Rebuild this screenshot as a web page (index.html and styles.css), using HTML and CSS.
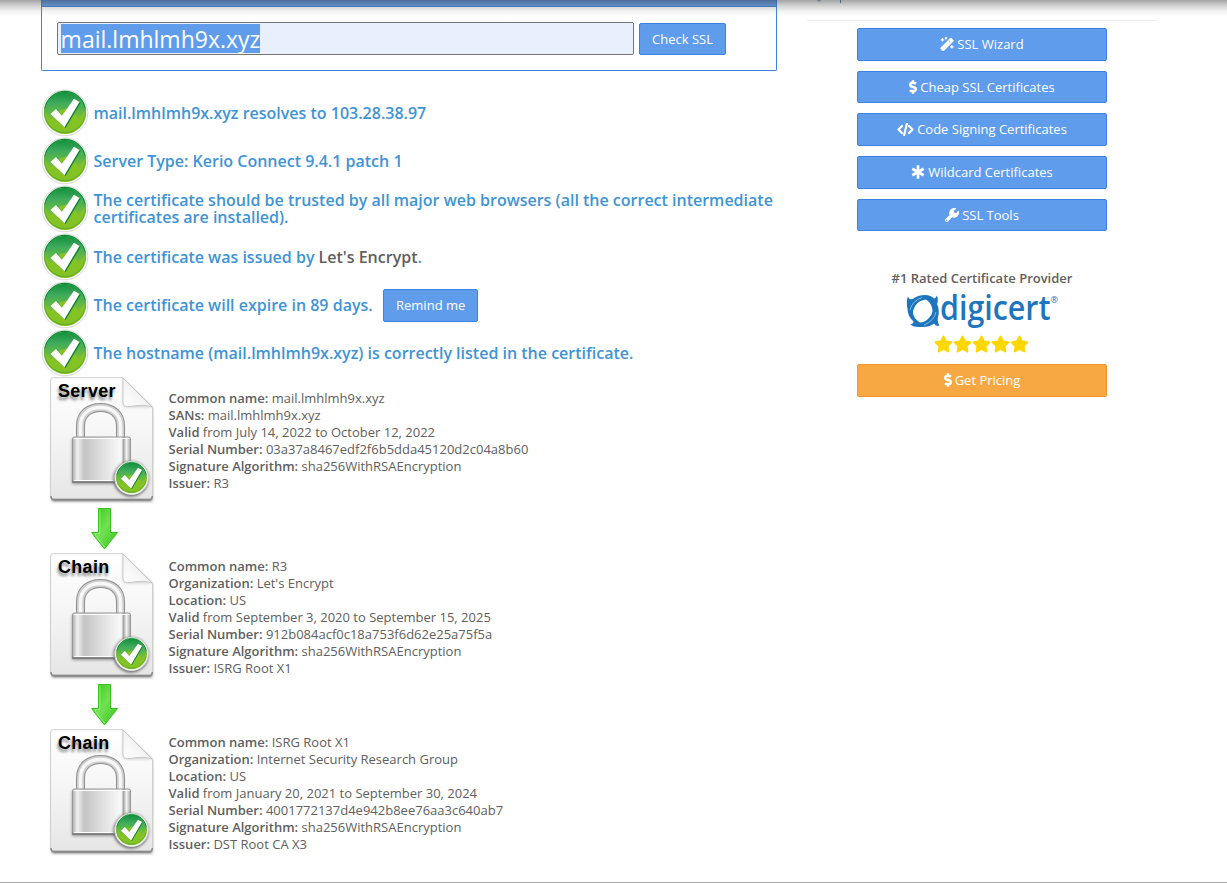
FILE: index.html
```html
<!DOCTYPE html>
<html lang="en">
<head>
<meta charset="utf-8">
<title>SSL Checker</title>
<link rel="stylesheet" href="styles.css">
</head>
<body>
<svg class="defs" aria-hidden="true">
  <defs>
    <linearGradient id="greenTop" x1="0" y1="0" x2="0" y2="1"><stop offset="0" stop-color="#138f3e"/><stop offset=".4" stop-color="#3fac5c"/><stop offset="1" stop-color="#7fc130"/></linearGradient>
    <linearGradient id="page" x1="0" y1="0" x2="0" y2="1"><stop offset="0" stop-color="#fff"/><stop offset=".45" stop-color="#f6f6f6"/><stop offset="1" stop-color="#e6e6e6"/></linearGradient>
    <linearGradient id="fold" x1="0" y1="1" x2="1" y2="0"><stop offset="0" stop-color="#fff"/><stop offset=".45" stop-color="#f4f4f4"/><stop offset="1" stop-color="#bbb"/></linearGradient>
    <linearGradient id="metal" x1="0" y1="0" x2="1" y2="0"><stop offset="0" stop-color="#aaa"/><stop offset=".08" stop-color="#f0f0f0"/><stop offset=".2" stop-color="#c4c4c4"/><stop offset=".5" stop-color="#dedede"/><stop offset=".84" stop-color="#fafafa"/><stop offset=".88" stop-color="#a5a5a5"/><stop offset=".93" stop-color="#f2f2f2"/><stop offset="1" stop-color="#aaa"/></linearGradient>
    <linearGradient id="arrowFill" x1="0" y1="0" x2="1" y2="1"><stop offset="0" stop-color="#36c51b"/><stop offset=".5" stop-color="#73e052"/><stop offset="1" stop-color="#35c51c"/></linearGradient>
    <filter id="soft" x="-20%" y="-20%" width="140%" height="150%"><feGaussianBlur stdDeviation="1.5"/></filter>
    <symbol id="check" viewBox="0 0 48 48">
      <circle cx="24" cy="24" r="22.8" fill="#fff" stroke="#dedede" stroke-width="1.2"/>
      <circle cx="24" cy="24" r="21" fill="#84c225"/>
      <path d="M3.4 20A21 21 0 0 1 44.600 20Q42 27 37 30Q32 20 24 20Q16 20 9 31Q5 26 3.400 20Z" fill="url(#greenTop)"/>
      <path d="M3.800 19A20.600 20.600 0 0 1 44.200 19" fill="none" stroke="#0d8a38" stroke-width="1.200"/>
      <path d="M3.800 19A20.600 20.600 0 1 0 44.200 19" fill="none" stroke="#4ea42b" stroke-width=".8"/>
      <path d="M10 25.500L15.500 20.500L21.500 27L33.500 10L39 13.500L24 38.500Z" fill="#087d30" transform="translate(.5 .6)"/>
      <path d="M9.500 25L15 20L21 26.800L33 9.800L38.500 13L23.500 38.300Z" fill="#fff"/>
    </symbol>
    <symbol id="doc" viewBox="0 0 128 128">
      <path d="M11 3H82L111 31V124H11Z" fill="#555" filter="url(#soft)"/>
      <path d="M12.500 .7H81.500L111.500 30.500V119Q111.500 122 108.500 122H12.500Q9.600 122 9.600 119V3.500Q9.600 .7 12.500 .7Z" fill="url(#page)" stroke="#cfcfcf"/>
      <path d="M10 119Q10 122.600 13 122.600H108Q111.300 122.600 111.300 119" fill="none" stroke="#888" stroke-width="1.500"/>
      <path d="M82 2V26Q82 30 86 30H111Q98 25 82 2Z" fill="#777" opacity=".35" filter="url(#soft)"/>
      <path d="M82 1L111 30Q103 27 90 29.500Q82 31 82 25Z" fill="url(#fold)" stroke="#c8c8c8"/>
      <path d="M39.500 61V49C39.500 37 48 30.500 59.500 30.500S79.500 37 79.500 49V61" fill="none" stroke="#8f8f8f" stroke-width="9"/>
      <path d="M39.500 61V49C39.500 37 48 30.500 59.500 30.500S79.500 37 79.500 49V61" fill="none" stroke="#cfcfcf" stroke-width="7"/>
      <path d="M39.500 61V49C39.500 37 48 30.500 59.500 30.500S79.500 37 79.500 49V61" fill="none" stroke="#f7f7f7" stroke-width="3.500"/>
      <path d="M31 62H88V107H31Z" fill="#555" opacity=".6" filter="url(#soft)"/>
      <rect x="31.500" y="60" width="58" height="45" rx="2" fill="url(#metal)" stroke="#999"/>
      <path d="M32.500 61.500H88.500M33 103.500H87" stroke="#fff"/>
      <path d="M31 105H77" stroke="#777" stroke-width="1.500"/>
      <circle cx="90" cy="102" r="17.500" fill="#666" filter="url(#soft)"/>
      <use href="#check" x="73" y="83.500" width="35" height="35"/>
    </symbol>
    <symbol id="arrow" viewBox="0 0 128 48">
      <path d="M57.500 3.500H69.500V27.500H76.500L63.500 44L50.500 27.500H57.500Z" fill="url(#arrowFill)" stroke="#34c51b"/>
      <path d="M58.800 5V28.800H53.500L63.500 42" fill="none" stroke="#a8f28c" stroke-opacity=".75"/>
    </symbol>
    <symbol id="dollar" viewBox="0 0 288 512"><path fill="currentColor" stroke="currentColor" stroke-width="16" d="M209 233l-108-31c-13-4-21-15-21-28 0-16 13-30 29-30h67c12 0 24 4 34 11 6 4 14 3 20-2l35-34c7-7 6-19-2-25-24-19-55-30-87-30V16c0-9-7-16-16-16h-32c-9 0-16 7-16 16v48h-2C46 64-6 118 1 183c4 46 40 83 84 96l103 30c12 4 20 15 20 28 0 17-13 31-29 31h-67c-12 0-24-4-34-11-6-4-14-3-20 2l-35 34c-7 7-6 19 2 25 24 19 55 30 87 30v48c0 9 7 16 16 16h32c9 0 16-7 16-16v-48c47-1 90-29 106-73 22-62-14-125-73-142z"/></symbol>
    <symbol id="star" viewBox="0 0 576 512"><path fill="currentColor" d="M259 18l-65 132-146 21c-26 4-37 36-18 55l106 103-25 145c-4 26 23 46 46 34l131-68 131 68c23 12 50-8 46-34l-25-145 106-103c19-19 8-51-18-55l-146-21-65-132c-12-24-46-24-58 0z"/></symbol>
  </defs>
</svg>
<div class="layout">
  <main class="main">
    <section class="checker">
      <div class="checker-head"></div>
      <div class="checker-form"><div class="field"><span class="selected">mail.lmhlmh9x.xyz</span></div><a class="btn">Check SSL</a></div>
    </section>
    <section class="results">
      <div class="result"><svg class="check"><use href="#check"/></svg><p>mail.lmhlmh9x.xyz resolves to 103.28.38.97</p></div>
      <div class="result"><svg class="check"><use href="#check"/></svg><p>Server Type: Kerio Connect 9.4.1 patch 1</p></div>
      <div class="result"><svg class="check"><use href="#check"/></svg><p>The certificate should be trusted by all major web browsers (all the correct intermediate<br>certificates are installed).</p></div>
      <div class="result"><svg class="check"><use href="#check"/></svg><p>The certificate was issued by <span class="issuer">Let's Encrypt</span>.</p></div>
      <div class="result"><svg class="check"><use href="#check"/></svg><p>The certificate will expire in 89 days.</p><a class="btn remind">Remind me</a></div>
      <div class="result"><svg class="check"><use href="#check"/></svg><p>The hostname (mail.lmhlmh9x.xyz) is correctly listed in the certificate.</p></div>
    </section>
    <section class="chain">
      <div class="cert">
        <div class="cert-icon"><svg><use href="#doc"/></svg><span>Server</span></div>
        <div class="cert-info"><b>Common name:</b> mail.lmhlmh9x.xyz<br><b>SANs:</b> mail.lmhlmh9x.xyz<br><b>Valid</b> from July 14, 2022 to October 12, 2022<br><b>Serial Number:</b> 03a37a8467edf2f6b5dda45120d2c04a8b60<br><b>Signature Algorithm:</b> sha256WithRSAEncryption<br><b>Issuer:</b> R3</div>
      </div>
      <svg class="arrow"><use href="#arrow"/></svg>
      <div class="cert">
        <div class="cert-icon"><svg><use href="#doc"/></svg><span>Chain</span></div>
        <div class="cert-info"><b>Common name:</b> R3<br><b>Organization:</b> Let's Encrypt<br><b>Location:</b> US<br><b>Valid</b> from September 3, 2020 to September 15, 2025<br><b>Serial Number:</b> 912b084acf0c18a753f6d62e25a75f5a<br><b>Signature Algorithm:</b> sha256WithRSAEncryption<br><b>Issuer:</b> ISRG Root X1</div>
      </div>
      <svg class="arrow"><use href="#arrow"/></svg>
      <div class="cert">
        <div class="cert-icon"><svg><use href="#doc"/></svg><span>Chain</span></div>
        <div class="cert-info"><b>Common name:</b> ISRG Root X1<br><b>Organization:</b> Internet Security Research Group<br><b>Location:</b> US<br><b>Valid</b> from January 20, 2021 to September 30, 2024<br><b>Serial Number:</b> 4001772137d4e942b8ee76aa3c640ab7<br><b>Signature Algorithm:</b> sha256WithRSAEncryption<br><b>Issuer:</b> DST Root CA X3</div>
      </div>
    </section>
  </main>
  <aside class="side">
    <div class="side-top"><svg width="60" height="4" viewBox="0 0 60 4"><path d="M17.500 .8H20.500M40.500 0V3" fill="none" stroke="#5b82b5" stroke-width="1" transform="translate(-7)"/></svg></div>
    <nav class="links">
      <a class="btn"><svg class="i14" viewBox="0 0 14 14"><path d="M1.500 11.300L10.800 2L12.500 3.700L3.200 13Z" fill="currentColor" stroke="currentColor" stroke-width="2.300" stroke-linejoin="round"/><path d="M8.600 4L10.500 5.900" stroke="#5f9cec" stroke-width=".9"/><path d="M2.500 1v3.600M.7 2.800h3.600M6 0v2.400M4.800 1.200h2.400M11.800 8v3.600M10 9.800h3.600" stroke="currentColor" stroke-width="1.300"/></svg>SSL Wizard</a>
      <a class="btn"><svg class="i-dollar"><use href="#dollar"/></svg>Cheap SSL Certificates</a>
      <a class="btn"><svg class="i-code" viewBox="0 0 17 13"><path d="M5 3L1.500 6.500L5 10M12 3L15.500 6.500L12 10M9.800 1L7.200 12" fill="none" stroke="currentColor" stroke-width="2.200" stroke-linecap="round" stroke-linejoin="round"/></svg>Code Signing Certificates</a>
      <a class="btn"><svg class="i14" viewBox="0 0 13 13"><path d="M6.500 .2V12.800M1.200 3.500L11.800 9.500M1.200 9.500L11.800 3.500" stroke="currentColor" stroke-width="2.500"/></svg>Wildcard Certificates</a>
      <a class="btn"><svg class="i14" viewBox="0 0 512 512"><path fill="currentColor" d="M507 117c-3-12-18-16-27-7l-74 74-68-11-11-68 74-74c9-9 5-24-7-28-64-16-135 1-185 51-53 53-67 131-41 198L19 402a63 63 0 0 0 90 90l151-150c66 25 143 12 197-42 50-50 66-120 50-183zM64 472a24 24 0 1 1 0-48 24 24 0 0 1 0 48z"/></svg>SSL Tools</a>
    </nav>
    <div class="provider">
      <b>#1 Rated Certificate Provider</b>
      <svg class="logo" viewBox="0 0 152 38">
        <path fill="#1d75bd" fill-rule="evenodd" d="M1.800 5.500Q3 8.500 6 8.300Q12 4 19 4Q25 4 28 7.500Q30 7.500 30.500 4.500Q33 8 31 13Q34 19 32 26Q31 31 33.500 34.500Q30 36 28 32.500Q23 36.500 15 36Q8 36.500 4 33.500Q7 33.500 7.500 30.500Q1.500 25 1.500 18Q0 11 1.800 5.500ZM20 8.500C13 9 8.500 14 7 20.500C7 25.500 10 29 14 31.500C20 31 25 26.500 26.500 20.500C26.500 15 24 11 20 8.500Z"/>
        <path d="M4 19Q6 10 16 6.500M30 21Q28 30 18 34" fill="none" stroke="#fff" stroke-width=".5"/>
        <text x="34" y="28.500" class="logo-text" textLength="110.500" lengthAdjust="spacingAndGlyphs">digicert</text>
        <text x="144.500" y="11.500" class="logo-reg">®</text>
      </svg>
      <div class="stars"><svg><use href="#star"/></svg><svg><use href="#star"/></svg><svg><use href="#star"/></svg><svg><use href="#star"/></svg><svg><use href="#star"/></svg></div>
      <a class="btn orange"><svg class="i-dollar"><use href="#dollar"/></svg>Get Pricing</a>
    </div>
  </aside>
</div>
<div class="shade"></div>
</body>
</html>
```
FILE: styles.css
```css
* { box-sizing: border-box; }
body { margin: 0; height: 883px; overflow: hidden; background: #fff; border-bottom: 1px solid #a5a5a5; font: 13px/17px "Open Sans", sans-serif; color: #606060; }
.defs { position: absolute; width: 0; height: 0; }
.layout { display: flex; gap: 30px; padding-left: 41px; }
.main { width: 736px; }
.checker { height: 71px; border: 1px solid #3b80e3; border-top: 0; border-radius: 0 0 2px 2px; }
.checker-head { height: 7px; background: #5f9cec; border-bottom: 1px solid #3b80e3; }
.checker-form { display: flex; gap: 5px; padding: 15px 15px 0; }
.field { width: 577px; height: 33px; padding: 1px 2.6px; border: 1px solid #767676; border-radius: 2px; background: #e8effd; font-size: 23px; line-height: 30px; }
.selected { display: block; width: max-content; height: 29px; background: #5f9cec; color: #fff; }
.btn { display: flex; align-items: center; justify-content: center; height: 32.7px; padding: 0 12px; border: 1px solid #3b80e3; border-radius: 2px; background: #5f9cec; color: #fff; white-space: nowrap; }
.checker-form .btn { height: 32px; width: 87px; margin-top: 1px; padding: 0; }
.results { padding-top: 18px; }
.result { display: flex; align-items: center; height: 48px; font-size: 16px; font-weight: 600; color: #4094d6; white-space: nowrap; }
.result p { margin: 0 0 0 4.5px; }
.check { width: 48px; height: 48px; flex: none; }
.issuer { color: #606060; }
.remind { width: 95px; height: 33px; margin: 1px 0 0 10.5px; padding: 0; font-size: 13px; font-weight: 400; }
.cert { display: flex; align-items: center; height: 128px; }
.cert-icon { position: relative; width: 127.5px; height: 128px; flex: none; }
.cert-icon svg { display: block; width: 128px; height: 128px; }
.cert-icon span { position: absolute; left: 17px; top: 3px; font: bold 18px/22px "Liberation Sans", Arial, sans-serif; letter-spacing: .3px; color: #000; text-shadow: -1px 3px 3px #888; }
.cert-info { white-space: nowrap; }
b { font-weight: 600; }
.arrow { display: block; width: 128px; height: 48px; }
.side { width: 350px; }
.side-top { height: 21px; border-bottom: 1px solid #eee; }
.side-top svg { display: block; }
.links { display: flex; flex-direction: column; gap: 10px; width: 250px; margin: 7px auto 0; }
.btn svg { flex: none; margin-right: 3px; }
.i14 { width: 14px; height: 14px; }
.i-code { width: 17px; height: 13px; }
.i-dollar { width: 8px; height: 14px; }
.provider { display: flex; flex-direction: column; align-items: center; padding-top: 38.5px; }
.logo { display: block; width: 152px; height: 38px; margin-top: 4px; overflow: visible; }
.logo-text { font: 600 34px "Open Sans", sans-serif; fill: #1d75bd; }
.logo-reg { font: 9px "Open Sans", sans-serif; fill: #1d75bd; }
.stars { display: flex; margin: 6px 1px 0 0; color: #ffd700; }
.stars svg { width: 19px; height: 18px; }
.provider .btn { width: 250px; height: 33px; margin-top: 11px; }
.provider .orange { background: #f7a843; border-color: #f29423; }
.shade { position: absolute; left: 0; top: 0; width: 100%; height: 17px; background: linear-gradient(rgba(60,60,60,.47), rgba(100,100,100,.28) 35%, rgba(130,130,130,.08) 70%, transparent); }
```
